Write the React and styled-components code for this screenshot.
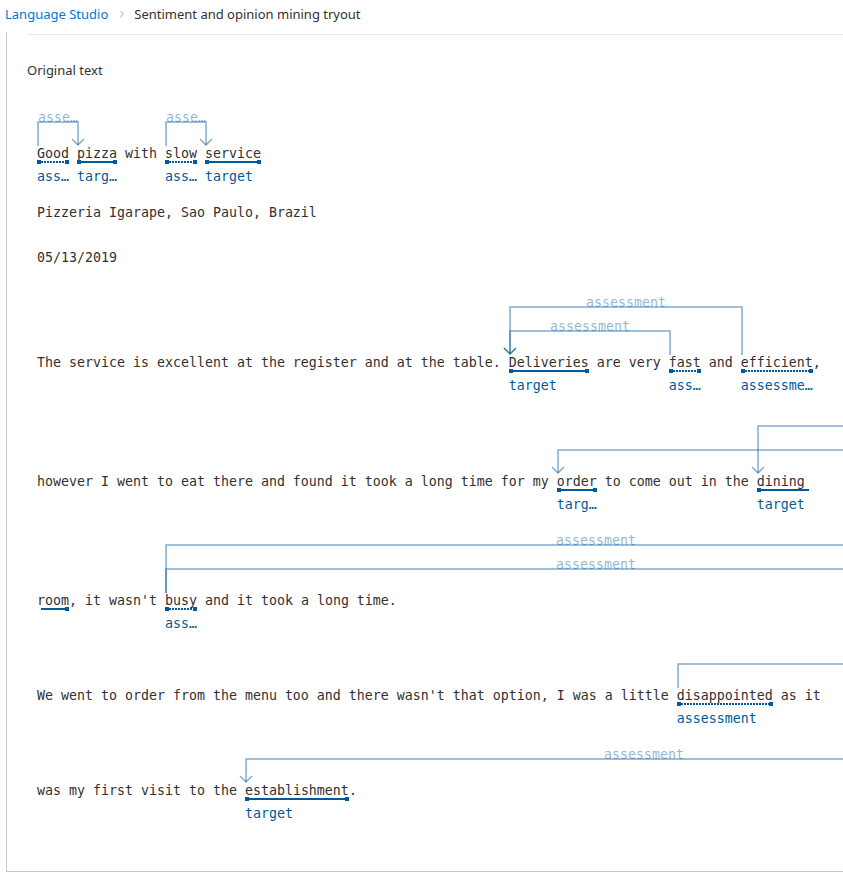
import React from 'react';
import styled, { createGlobalStyle } from 'styled-components';
import { ChevronRight } from 'lucide-react';

const CH = 8;
const ARC = 'rgba(0, 90, 158, 0.5)';
const ARC_LABEL = 'rgba(0, 90, 158, 0.45)';
const INK = '#005a9e';
const MONO = '"DejaVu Sans Mono", "Liberation Mono", monospace';

const GlobalStyle = createGlobalStyle`
  html, body {
    margin: 0;
    padding: 0;
    background: #fff;
    overflow: hidden;
  }
  body {
    font-family: "Segoe UI", "Noto Sans", sans-serif;
    color: #323130;
  }
`;

const Crumbs = styled.nav`
  display: flex;
  align-items: center;
  height: 28px;
  padding-left: 5px;
  font-size: 13px;
  margin-bottom: 4px;
`;

const CrumbLink = styled.span`
  color: #0078d4;
`;

const CrumbSep = styled.span`
  display: flex;
  margin: 0 6px 0 8px;
  color: #8a8886;
`;

const Panel = styled.section`
  margin-left: 6px;
  border-left: 1px solid #c8c6c4;
  border-bottom: 1px solid #c8c6c4;
  overflow: hidden;
  padding-bottom: 48px;
`;

const Divider = styled.div`
  margin: 2px 0 0 20px;
  border-top: 1px solid #edebe9;
`;

const Heading = styled.h2`
  margin: 25px 0 0 20px;
  font-size: 13px;
  font-weight: 400;
  line-height: 20px;
`;

const Doc = styled.div`
  display: flex;
  flex-direction: column;
  margin-left: 30px;
  font-family: ${MONO};
  font-size: 13.29px;
`;

const Block = styled.div`
  margin-top: ${p => p.$gap}px;
`;

const Band = styled.svg`
  display: block;
  width: 100%;
  overflow: visible;
`;

const TextRow = styled.div`
  line-height: 16px;
  white-space: pre;
  color: #323130;
`;

const Word = styled.span`
  display: inline-flex;
  flex-direction: column;
  vertical-align: baseline;
`;

const WordText = styled.span`
  line-height: 16px;
`;

const Mark = styled.span`
  display: flex;
  align-items: center;
  height: 4px;
  margin-top: -2px;
`;

const Cap = styled.span`
  width: 4px;
  height: 4px;
  flex: none;
  background: ${INK};
  visibility: ${p => (p.$on ? 'visible' : 'hidden')};
`;

const Stroke = styled.span`
  flex: 1;
  height: 2px;
  background: ${p =>
    p.$dotted
      ? `repeating-linear-gradient(90deg, ${INK} 0 2px, transparent 2px 3px)`
      : INK};
`;

const Tag = styled.span`
  margin-top: 4px;
  line-height: 18px;
  color: ${INK};
  white-space: nowrap;
  overflow: hidden;
  text-overflow: ellipsis;
`;

function fitLabel(label, chars) {
  if (label.length <= chars) return label;
  return label.slice(0, Math.max(chars - 1, 0)) + '…';
}

function Arc({ from, to, level, band }) {
  const x1 = from * CH + 1;
  const x2 = to * CH + 1;
  const y = band - 24 * level;
  const left = Math.min(x1, x2);
  const right = Math.max(x1, x2);
  const text = fitLabel('assessment', Math.floor((right - left) / CH));
  return (
    <g>
      <path d={`M${x1} ${band} V${y} H${x2} V${band - 1}`} fill="none" stroke={ARC} strokeWidth="1.5" />
      <path d={`M${x2 - 6} ${band - 7} L${x2} ${band - 1} L${x2 + 6} ${band - 7}`} fill="none" stroke={ARC} strokeWidth="1.5" />
      <text
        x={(left + right) / 2}
        y={y}
        textAnchor="middle"
        fill={ARC_LABEL}
        fontFamily={MONO}
        fontSize="13.29"
      >
        {text}
      </text>
    </g>
  );
}

function Annotated({ part }) {
  const len = part.t.length;
  const markLen = part.mark || len;
  return (
    <Word>
      <WordText>{part.t}</WordText>
      <Mark style={{ width: markLen * CH }}>
        <Cap $on={part.start !== false} />
        <Stroke $dotted={part.kind === 'assessment'} />
        <Cap $on={part.end !== false} />
      </Mark>
      {part.label !== false && (
        <Tag style={{ width: len * CH }}>{part.kind}</Tag>
      )}
    </Word>
  );
}

function Line({ gap, levels = 0, arcs = [], parts }) {
  const band = levels ? 24 * levels + 15 : 0;
  return (
    <Block $gap={gap}>
      {levels > 0 && (
        <Band height={band}>
          {arcs.map((a, i) => (
            <Arc key={i} {...a} band={band} />
          ))}
        </Band>
      )}
      <TextRow>
        {parts.map((p, i) =>
          typeof p === 'string' ? <React.Fragment key={i}>{p}</React.Fragment> : <Annotated key={i} part={p} />
        )}
      </TextRow>
    </Block>
  );
}

const T = (t, extra) => ({ t, kind: 'target', ...extra });
const A = (t, extra) => ({ t, kind: 'assessment', ...extra });

export default function App() {
  return (
    <>
      <GlobalStyle />
      <Crumbs>
        <CrumbLink>Language Studio</CrumbLink>
        <CrumbSep>
          <ChevronRight size={12} strokeWidth={1.5} />
        </CrumbSep>
        <span>Sentiment and opinion mining tryout</span>
      </Crumbs>
      <Panel>
        <Divider />
        <Heading>Original text</Heading>
        <Doc>
          <Line
            gap={27}
            levels={1}
            arcs={[
              { from: 0, to: 5, level: 1 },
              { from: 16, to: 21, level: 1 },
            ]}
            parts={[A('Good'), ' ', T('pizza'), ' with ', A('slow'), ' ', T('service')]}
          />
          <Line gap={19} parts={['Pizzeria Igarape, Sao Paulo, Brazil']} />
          <Line gap={29} parts={['05/13/2019']} />
          <Line
            gap={26}
            levels={2}
            arcs={[
              { from: 88, to: 59, level: 2 },
              { from: 79, to: 59, level: 1 },
            ]}
            parts={[
              'The service is excellent at the register and at the table. ',
              T('Deliveries'),
              ' are very ',
              A('fast'),
              ' and ',
              A('efficient'),
              ',',
            ]}
          />
          <Line
            gap={16}
            levels={2}
            arcs={[
              { from: 170, to: 90, level: 2 },
              { from: 170, to: 65, level: 1 },
            ]}
            parts={[
              'however I went to eat there and found it took a long time for my ',
              T('order'),
              ' to come out in the ',
              T('dining', { mark: 7, end: false }),
            ]}
          />
          <Line
            gap={16}
            levels={2}
            arcs={[
              { from: 16, to: 123.5, level: 2 },
              { from: 16, to: 123.5, level: 1 },
            ]}
            parts={[T('room', { start: false, label: false }), ', it wasn\'t ', A('busy'), ' and it took a long time.']}
          />
          <Line
            gap={16}
            levels={1}
            arcs={[{ from: 80, to: 170, level: 1 }]}
            parts={[
              'We went to order from the menu too and there wasn\'t that option, I was a little ',
              A('disappointed'),
              ' as it',
            ]}
          />
          <Line
            gap={16}
            levels={1}
            arcs={[{ from: 125.5, to: 26, level: 1 }]}
            parts={['was my first visit to the ', T('establishment'), '.']}
          />
        </Doc>
      </Panel>
    </>
  );
}
